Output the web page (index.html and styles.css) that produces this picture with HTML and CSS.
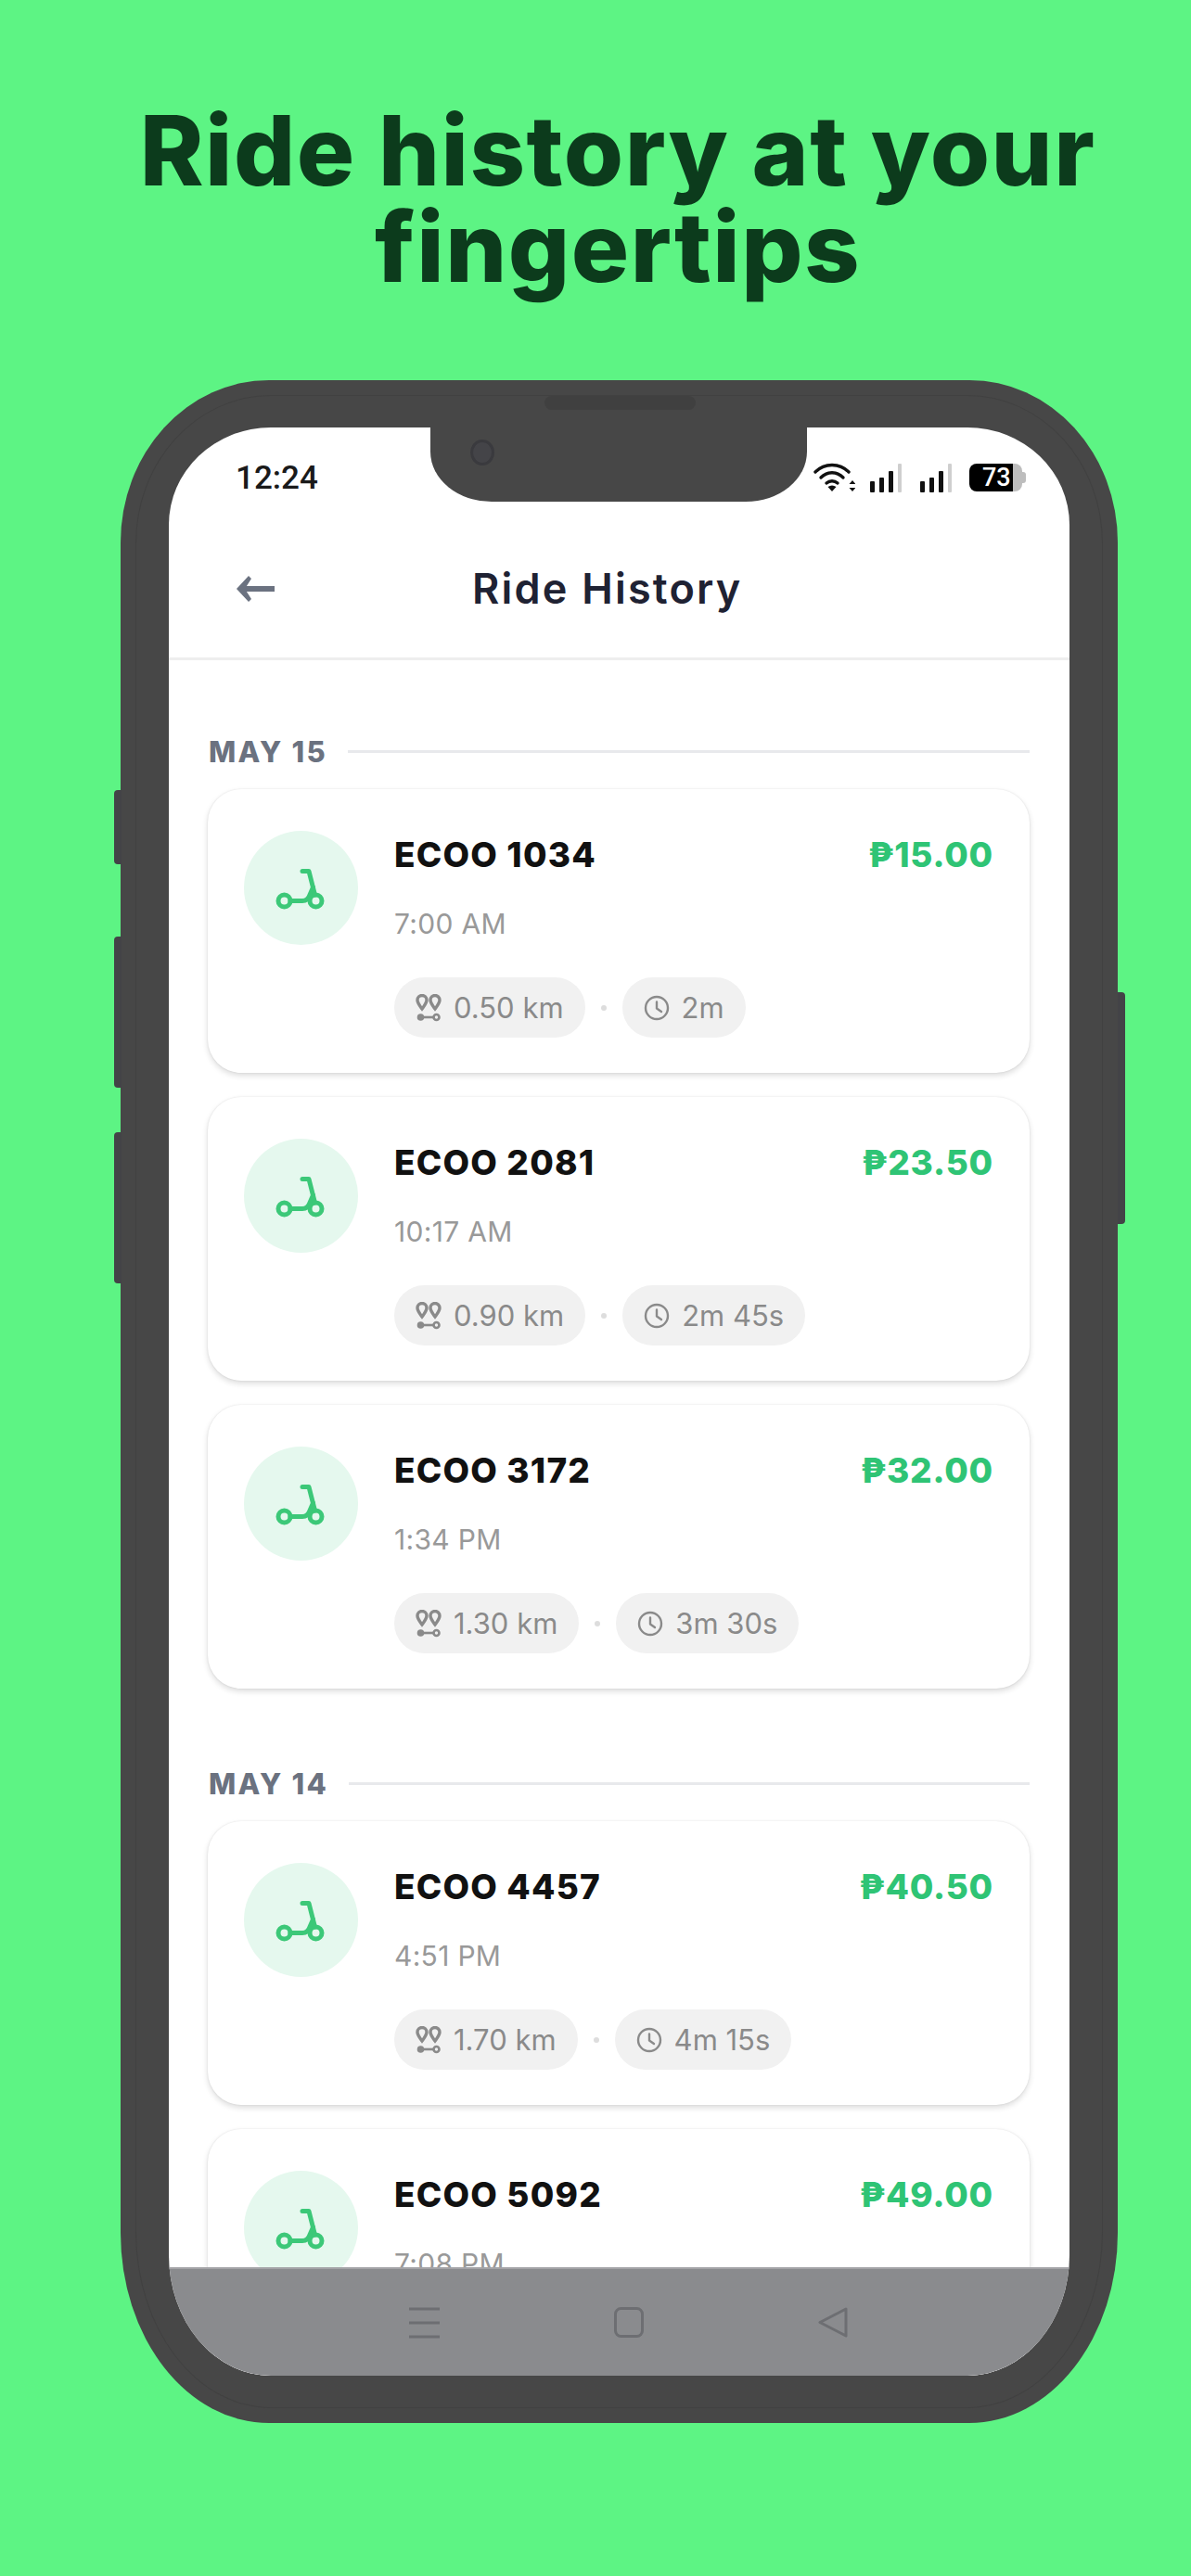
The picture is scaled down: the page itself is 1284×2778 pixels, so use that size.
FILE: index.html
```html
<!DOCTYPE html>
<html lang="en">
<head>
    <meta charset="UTF-8">
    <meta name="viewport" content="width=device-width, initial-scale=1.0">
    <title>Ride History</title>
    <link rel="stylesheet" href="styles.css">
</head>
<body>

    <svg class="sprites" width="0" height="0">
        <symbol id="scooter" viewBox="0 0 60 60">
            <g fill="none" stroke="#3cc878" stroke-width="5" stroke-linecap="round" stroke-linejoin="round">
                <circle cx="11.5" cy="43.5" r="6.5"/>
                <circle cx="45.5" cy="43.5" r="6.5"/>
                <path d="M18 43.500H31Q37 43.500 39 37L42.500 29"/>
                <path d="M31 11.500H38L44.500 37"/>
            </g>
        </symbol>
        <symbol id="route" viewBox="0 0 28 30">
            <g fill="none" stroke="#8a8a8a" stroke-width="3.4">
                <path d="M7 16C4 12 2 9.500 2 6.500a5 5 0 0 1 10 0C12 9.500 10 12 7 16Z"/>
                <path d="M21 16C18 12 16 9.500 16 6.500a5 5 0 0 1 10 0C26 9.500 24 12 21 16Z"/>
            </g>
            <path d="M6 25H19" stroke="#8a8a8a" stroke-width="2.6" fill="none"/>
            <circle cx="22.500" cy="25" r="3" stroke="#8a8a8a" stroke-width="2.6" fill="none"/>
            <circle cx="5.500" cy="25" r="3.800" fill="#8a8a8a"/>
        </symbol>
        <symbol id="clock" viewBox="0 0 28 28">
            <g fill="none" stroke="#8a8a8a" stroke-width="2.4" stroke-linecap="round" stroke-linejoin="round">
                <circle cx="14" cy="14" r="12"/>
                <path d="M14 7.500V14.500L19 18"/>
            </g>
        </symbol>
        <symbol id="signal" viewBox="0 0 35 31">
            <rect x="0" y="19" width="5" height="12" rx="1" fill="#111"/>
            <rect x="10" y="15" width="5" height="16" rx="1" fill="#111"/>
            <rect x="20" y="8" width="5" height="23" rx="1" fill="#111"/>
            <rect x="30" y="0" width="4" height="31" rx="1" fill="#cfcfcf"/>
        </symbol>
    </svg>

    <h1 class="headline">Ride history at your fingertips</h1>

    <div class="phone">
        <span class="side-btn side-btn-1"></span>
        <span class="side-btn side-btn-2"></span>
        <span class="side-btn side-btn-3"></span>
        <span class="side-btn side-btn-power"></span>
        <span class="rim"></span>
        <span class="speaker"></span>

        <div class="screen">
            <div class="notch"><span class="camera"></span></div>

            <div class="status-bar">
                <span class="clock-time">12:24</span>
                <div class="status-icons">
                    <svg class="wifi" width="45" height="32" viewBox="0 0 45 32">
                        <g fill="none" stroke="#111" stroke-width="3.4" stroke-linecap="round">
                            <path d="M2 10C12 0 28 0 38 10"/>
                            <path d="M8 16C15 9 25 9 32 16"/>
                            <path d="M14 22C17.500 19 22.500 19 26 22"/>
                        </g>
                        <path d="M20 31L15.500 26Q20 23 24.500 26Z" fill="#111"/>
                        <path d="M42 19l-3.500 4h7ZM42 31l-3.500-4h7Z" fill="#111"/>
                    </svg>
                    <svg class="signal" width="35" height="31"><use href="#signal"/></svg>
                    <svg class="signal" width="35" height="31"><use href="#signal"/></svg>
                    <div class="battery">73</div>
                </div>
            </div>

            <header class="top-bar">
                <svg class="back" width="41" height="28" viewBox="0 0 41 28">
                    <path d="M41 14H8" stroke="#6b7280" stroke-width="6" fill="none"/>
                    <path d="M13 0L0 14L13 28L16 25L9 14L16 3Z" fill="#6b7280"/>
                </svg>
                <h2 class="top-title">Ride History</h2>
            </header>

            <main class="history">
                <div class="date-label"><span>MAY 15</span></div>

                <div class="ride-card">
                    <div class="ride-icon"><svg width="60" height="60"><use href="#scooter"/></svg></div>
                    <div class="ride-body">
                        <div class="ride-top"><span class="ride-name">ECOO 1034</span><span class="ride-price">₱15.00</span></div>
                        <div class="ride-time">7:00 AM</div>
                        <div class="ride-chips">
                            <span class="chip"><svg width="28" height="30"><use href="#route"/></svg>0.50 km</span>
                            <span class="dot"></span>
                            <span class="chip"><svg width="28" height="28"><use href="#clock"/></svg>2m</span>
                        </div>
                    </div>
                </div>

                <div class="ride-card">
                    <div class="ride-icon"><svg width="60" height="60"><use href="#scooter"/></svg></div>
                    <div class="ride-body">
                        <div class="ride-top"><span class="ride-name">ECOO 2081</span><span class="ride-price">₱23.50</span></div>
                        <div class="ride-time">10:17 AM</div>
                        <div class="ride-chips">
                            <span class="chip"><svg width="28" height="30"><use href="#route"/></svg>0.90 km</span>
                            <span class="dot"></span>
                            <span class="chip"><svg width="28" height="28"><use href="#clock"/></svg>2m 45s</span>
                        </div>
                    </div>
                </div>

                <div class="ride-card">
                    <div class="ride-icon"><svg width="60" height="60"><use href="#scooter"/></svg></div>
                    <div class="ride-body">
                        <div class="ride-top"><span class="ride-name">ECOO 3172</span><span class="ride-price">₱32.00</span></div>
                        <div class="ride-time">1:34 PM</div>
                        <div class="ride-chips">
                            <span class="chip"><svg width="28" height="30"><use href="#route"/></svg>1.30 km</span>
                            <span class="dot"></span>
                            <span class="chip"><svg width="28" height="28"><use href="#clock"/></svg>3m 30s</span>
                        </div>
                    </div>
                </div>

                <div class="date-label date-label-next"><span>MAY 14</span></div>

                <div class="ride-card">
                    <div class="ride-icon"><svg width="60" height="60"><use href="#scooter"/></svg></div>
                    <div class="ride-body">
                        <div class="ride-top"><span class="ride-name">ECOO 4457</span><span class="ride-price">₱40.50</span></div>
                        <div class="ride-time">4:51 PM</div>
                        <div class="ride-chips">
                            <span class="chip"><svg width="28" height="30"><use href="#route"/></svg>1.70 km</span>
                            <span class="dot"></span>
                            <span class="chip"><svg width="28" height="28"><use href="#clock"/></svg>4m 15s</span>
                        </div>
                    </div>
                </div>

                <div class="ride-card">
                    <div class="ride-icon"><svg width="60" height="60"><use href="#scooter"/></svg></div>
                    <div class="ride-body">
                        <div class="ride-top"><span class="ride-name">ECOO 5092</span><span class="ride-price">₱49.00</span></div>
                        <div class="ride-time">7:08 PM</div>
                    </div>
                </div>
            </main>

            <nav class="nav-bar">
                <svg width="33" height="34" viewBox="0 0 33 34">
                    <path d="M0 2H33M0 17H33M0 32H33" stroke="#6d6e72" stroke-width="3" fill="none"/>
                </svg>
                <svg width="32" height="33" viewBox="0 0 32 33">
                    <rect x="1.500" y="1.500" width="29" height="30" rx="6" stroke="#6d6e72" stroke-width="3" fill="none"/>
                </svg>
                <svg width="32" height="33" viewBox="0 0 32 33">
                    <path d="M30 2L2 16.500L30 31Z" stroke="#6d6e72" stroke-width="3" stroke-linejoin="round" fill="none"/>
                </svg>
            </nav>
        </div>
    </div>

</body>
</html>
```

FILE: styles.css
```css
body {
    margin: 0;
    height: 2778px;
    overflow: hidden;
    background-color: #5df484;
    font-family: 'Inter', 'Noto Sans', sans-serif;
}

.sprites {
    position: absolute;
}

.headline {
    width: 1100px;
    margin: 0 0 0 116px;
    padding-top: 110px;
    font-size: 104px;
    font-weight: 800;
    line-height: 104px;
    letter-spacing: 1.5px;
    text-align: center;
    color: #0c3b1c;
}

/* phone frame */
.phone {
    position: relative;
    box-sizing: border-box;
    width: 1075px;
    height: 2203px;
    margin: 92px 0 0 130px;
    padding: 51px 52px;
    background-color: #474747;
    border-radius: 160px / 175px 175px 205px 205px;
}

.rim {
    position: absolute;
    inset: 16px;
    border: 1px solid #414141;
    border-radius: 146px / 160px 160px 190px 190px;
}

.side-btn {
    position: absolute;
    left: -7px;
    width: 8px;
    background-color: #434347;
    border-radius: 4px 0 0 4px;
}

.side-btn-1 { top: 442px; height: 80px; }
.side-btn-2 { top: 600px; height: 163px; }
.side-btn-3 { top: 811px; height: 163px; }

.side-btn-power {
    left: auto;
    right: -8px;
    top: 660px;
    height: 250px;
    border-radius: 0 4px 4px 0;
}

.speaker {
    position: absolute;
    top: 17px;
    left: 457px;
    width: 163px;
    height: 15px;
    background-color: #404040;
    border-radius: 8px;
}

.screen {
    position: relative;
    height: 100%;
    overflow: hidden;
    background-color: #ffffff;
    border-radius: 110px / 105px 105px 130px 130px;
    display: flex;
    flex-direction: column;
}

.notch {
    position: absolute;
    top: 0;
    left: 282px;
    width: 406px;
    height: 80px;
    background-color: #474747;
    border-radius: 0 0 66px 66px / 0 0 54px 54px;
}

.camera {
    position: absolute;
    top: 13px;
    left: 43px;
    width: 26px;
    height: 28px;
    box-sizing: border-box;
    background-color: #444448;
    border: 3px solid #3a3a3e;
    border-radius: 50%;
}

/* status bar */
.status-bar {
    flex: none;
    height: 108px;
    padding: 0 51px 0 72px;
    box-sizing: border-box;
    display: flex;
    align-items: center;
    justify-content: space-between;
}

.clock-time {
    font-family: 'Roboto', sans-serif;
    font-size: 35px;
    font-weight: 500;
    color: #1a1a1a;
}

.status-icons {
    display: flex;
    align-items: center;
    gap: 19px;
}

.status-icons .wifi + .signal {
    margin-left: -3px;
}

.battery {
    position: relative;
    width: 57px;
    height: 30px;
    margin-left: -1px;
    padding-left: 14px;
    box-sizing: border-box;
    background: linear-gradient(to right, #000000 82%, #bdbdbd 82%);
    border-radius: 8px;
    font-family: 'Roboto', sans-serif;
    font-size: 27px;
    font-weight: 500;
    line-height: 30px;
    color: #ffffff;
}

.battery::after {
    content: "";
    position: absolute;
    top: 9px;
    right: -4px;
    width: 4px;
    height: 12px;
    background-color: #bdbdbd;
    border-radius: 0 3px 3px 0;
}

/* header */
.top-bar {
    flex: none;
    height: 143px;
    padding: 0 0 9px 73px;
    box-sizing: border-box;
    display: flex;
    align-items: center;
    gap: 213px;
    border-bottom: 3px solid #eeeeee;
}

.top-title {
    margin: 0;
    font-size: 45px;
    font-weight: 600;
    letter-spacing: 2.2px;
    color: #1f2233;
}

/* list */
.history {
    flex: 1;
    min-height: 0;
    padding: 83px 43px 0 42px;
}

.date-label {
    display: flex;
    align-items: center;
    gap: 22px;
    height: 30px;
    margin-bottom: 26px;
    padding-left: 1px;
    font-size: 31px;
    font-weight: 800;
    letter-spacing: 2.2px;
    color: #6b7280;
}

.date-label::after {
    content: "";
    flex: 1;
    height: 3px;
    background-color: #e8e9ec;
}

.date-label-next {
    margin-top: 87px;
}

.ride-card {
    display: flex;
    gap: 39px;
    height: 306px;
    box-sizing: border-box;
    margin-bottom: 26px;
    padding: 45px 39px 38px 39px;
    background-color: #ffffff;
    border-radius: 36px;
    box-shadow: 0 3px 6px rgba(0, 0, 0, 0.14), 0 0 2px rgba(0, 0, 0, 0.1);
}

.ride-icon {
    flex: none;
    width: 123px;
    height: 123px;
    background-color: #e5f8ee;
    border-radius: 50%;
    display: flex;
    align-items: center;
    justify-content: center;
}

.ride-body {
    flex: 1;
}

.ride-top {
    display: flex;
    align-items: center;
    justify-content: space-between;
    height: 50px;
}

.ride-name {
    font-size: 37px;
    font-weight: 800;
    letter-spacing: 1.2px;
    color: #111111;
}

.ride-price {
    font-size: 37px;
    font-weight: 800;
    letter-spacing: 0.8px;
    color: #2fc475;
}

.ride-time {
    margin-top: 25px;
    font-size: 30px;
    letter-spacing: 0.3px;
    line-height: 50px;
    color: #999999;
}

.ride-chips {
    display: flex;
    align-items: center;
    gap: 17px;
    margin-top: 33px;
}

.chip {
    display: flex;
    align-items: center;
    gap: 13px;
    height: 65px;
    padding: 0 23px;
    background-color: #f1f1f1;
    border-radius: 33px;
    font-size: 31px;
    color: #8a8a8a;
}

.dot {
    width: 6px;
    height: 6px;
    background-color: #dddddd;
    border-radius: 50%;
}

/* android nav buttons */
.nav-bar {
    position: absolute;
    left: 0;
    right: 0;
    bottom: 0;
    height: 117px;
    padding-left: 259px;
    box-sizing: border-box;
    display: flex;
    align-items: center;
    gap: 188px;
    background-color: #8a8b8e;
    border-top: 2px solid #a3a3a6;
}
```
